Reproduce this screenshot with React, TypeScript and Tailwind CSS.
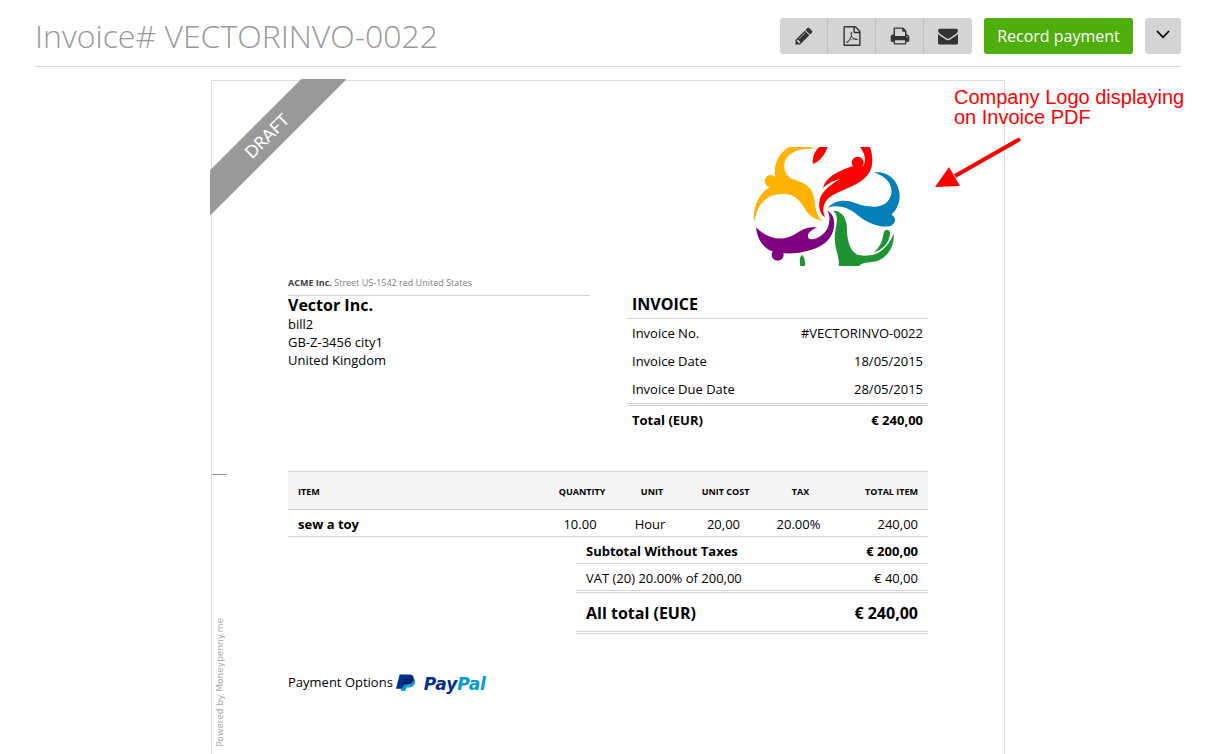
import React from 'react';
import { clsx } from 'clsx';

interface InvoiceLine {
  item: string;
  quantity: string;
  unit: string;
  unitCost: string;
  tax: string;
  total: string;
}

const details = [
  { label: 'Invoice No.', value: '#VECTORINVO-0022' },
  { label: 'Invoice Date', value: '18/05/2015' },
  { label: 'Invoice Due Date', value: '28/05/2015' },
];

const lines: InvoiceLine[] = [
  { item: 'sew a toy', quantity: '10.00', unit: 'Hour', unitCost: '20,00', tax: '20.00%', total: '240,00' },
];

const actions = [
  {
    label: 'Edit',
    path: 'M491 1536l91-91-235-235-91 91v107h128v128h107zM1014 608q0-22-22-22-10 0-17 7l-542 542q-7 7-7 17 0 22 22 22 10 0 17-7l542-542q7-7 7-17zM960 416l416 416-832 832H128v-416zM1643 512q0 53-37 90l-166 166-416-416 166-165q36-38 90-38 53 0 91 38l235 234q37 39 37 91z',
  },
  {
    label: 'Download PDF',
    path: 'M1596 380q28 28 48 76t20 88v1152q0 40-28 68t-68 28H224q-40 0-68-28t-28-68V96q0-40 28-68t68-28h896q40 0 88 20t76 48zm-444-244v376h376q-10-29-22-41l-313-313q-12-12-41-22zm384 1528V640h-416q-40 0-68-28t-28-68V128H256v1536h1280zm-514-593q33 26 84 56 59-7 117-7 147 0 177 49 16 22 2 52 0 1-1 2l-2 2v1q-6 38-71 38-48 0-115-20t-130-53q-221 24-392 83-153 262-242 262-15 0-28-7l-24-12q-1-1-6-5-10-10-6-36 9-40 56-91.5t132-96.5q14-9 23 6 2 2 2 4 52-85 107-197 68-136 104-262-24-82-30.5-159.5T785 552q11-40 42-40h22q23 0 35 15 18 21 9 68-2 6-4 8 1 3 1 8v30q-2 123-14 192 55 164 146 238zm-576 411q52-24 137-158-51 40-87.5 84t-49.5 74zm398-920q-15 42-2 132 1-7 7-44 0-3 7-43 1-4 4-8-1-1-1-2-1-2-1-3-1-22-13-36 0 1-1 2v2zm-124 661q135-54 284-81-2-1-13-9.5t-16-13.5q-76-67-127-176-27 86-83 197-30 56-45 83zm646-16q-24-24-140-24 76 28 124 28 14 0 18-1 0-1-2-3z',
  },
  {
    label: 'Print',
    path: 'M448 1536h896v-256H448v256zm0-640h896V512h-160q-40 0-68-28t-28-68V256H448v640zm1152 64q0-26-19-45t-45-19-45 19-19 45 19 45 45 19 45-19 19-45zm128 0v416q0 13-9.5 22.5t-22.5 9.5h-224v160q0 40-28 68t-68 28H416q-40 0-68-28t-28-68v-160H96q-13 0-22.5-9.5T64 1376V960q0-79 56.5-135.5T256 768h64V224q0-40 28-68t68-28h672q40 0 88 20t76 48l152 152q28 28 48 76t20 88v256h64q79 0 135.5 56.5T1728 960z',
  },
  {
    label: 'Send by email',
    path: 'M1792 710v794q0 66-47 113t-113 47H160q-66 0-113-47T0 1504V710q44 49 101 87 362 246 497 345 57 42 92.5 65.5t94.5 48 110 24.5h2q51 0 110-24.5t94.5-48T1194 1142q170-123 498-345 57-39 100-87zM1792 416q0 79-49 151t-122 123q-376 261-468 325-10 7-42.5 31t-54 38-52 31.5-57.5 27T897 1152h-2q-23 0-49.5-9.5t-57.5-27-52-31.5-54-38-42.5-31Q547 951 171 690 98 639 49 567T0 416q0-66 47-113t113-47h1472q66 0 113 47t47 113z',
  },
];

const CompanyLogo: React.FC = () => (
  <svg viewBox="-66 12 600 357" className="w-[200px] h-[119px]" role="img" aria-label="Company logo">
    <g fill="#ffb300">
      <path d="M12 232C8 190 30 148 60 132L76 100C68 64 90 22 126 8C150 2 178 8 192 18C146 14 108 32 103 62C101 86 112 100 126 108C160 118 186 128 192 165C198 200 200 225 220 233C190 231 175 215 163 195C145 165 130 153 98 153C50 152 20 186 15 232Z" />
      <circle cx="62" cy="114" r="18" />
    </g>
    <g fill="#ff0000">
      <path d="M232 12H208C194 24 187 42 188 63C206 58 226 36 232 12Z" />
      <path d="M226 223C202 210 204 170 217 152C232 132 254 116 272 107C250 112 232 122 219 135C226 104 262 84 308 70L340 70C350 50 344 30 330 12H360C372 48 370 82 345 104C315 134 262 142 236 165C218 182 216 204 226 223Z" />
      <circle cx="323" cy="59" r="18" />
    </g>
    <g fill="#0480b8">
      <path d="M234 194C254 172 284 168 318 181C354 194 394 196 412 176C440 146 420 100 372 89C410 82 448 110 449 160C449 185 436 205 425 214L424 248C394 257 356 242 325 218C296 192 262 184 234 194Z" />
      <circle cx="418" cy="231" r="17" />
    </g>
    <g fill="#1d9331">
      <path d="M250 203C276 203 292 226 291 262C291 290 300 326 322 335C370 347 410 325 431 272C434 315 408 345 380 355C352 360 336 358 328 369H266C270 346 255 320 254 285C254 250 272 225 250 203Z" />
      <path d="M371 328C392 312 398 290 401 270C405 257 420 257 420 273C418 300 396 322 371 328Z" />
      <path d="M156 335C146 346 150 358 151 369H165C167 354 163 344 156 335Z" />
    </g>
    <g fill="#800080">
      <path d="M18 253C42 278 72 290 104 286C144 278 150 250 202 253C180 262 170 274 175 285C188 297 226 278 235 250C241 228 239 214 232 203C260 216 258 264 235 290C210 320 150 333 103 331L66 325C40 315 22 290 18 253Z" />
      <circle cx="83" cy="335" r="18" />
    </g>
  </svg>
);

const PayPalLogo: React.FC = () => (
  <span className="flex items-center gap-2">
    <svg viewBox="0 0 60 50" className="w-[20px] h-[17px]" aria-hidden="true">
      <path fill="#009cde" d="M22 14H54C60 20 59 38 40 40H32L28 50H14Z" />
      <path fill="#003087" d="M11 1H38C52 1 56 9 52 19C48 28 40 31 24 31L17 44H0Z" />
      <path fill="#012169" d="M24 14H47C52 14 53 17 52 19C48 28 40 31 24 31L19 40Z" />
    </svg>
    <span className="pt-1 font-['DejaVu_Sans'] text-[17px] leading-4 font-bold italic text-[#003087]">
      Pay<span className="text-[#009cde]">Pal</span>
    </span>
  </span>
);

const App: React.FC = () => {
  return (
    <div className="min-h-screen flex flex-col bg-white pl-[35px] pr-10 pt-[18px] font-['Open_Sans',sans-serif] text-[13px] leading-[18px] text-black">
      <header className="flex items-center justify-between border-b border-[#d4d4d4] pb-3">
        <h1 className="text-[32px] leading-9 font-light text-[#999]">Invoice# VECTORINVO-0022</h1>
        <div className="flex gap-3">
          <div className="flex overflow-hidden rounded-[3px] bg-[#d4d4d4]">
            {actions.map((action, index) => (
              <button
                key={action.label}
                type="button"
                aria-label={action.label}
                className={clsx(
                  'flex h-9 w-12 items-center justify-center text-[#333]',
                  index < actions.length - 1 && 'border-r border-[#bfbfbf]'
                )}
              >
                <svg viewBox="0 0 1792 1792" className="size-5" fill="currentColor">
                  <path d={action.path} />
                </svg>
              </button>
            ))}
          </div>
          <button type="button" className="h-9 w-[149px] rounded-[3px] bg-[#4fae0a] text-[16px] text-white">
            Record payment
          </button>
          <button
            type="button"
            aria-label="More actions"
            className="flex size-9 items-center justify-center rounded-[3px] bg-[#d4d4d4] pb-1"
          >
            <svg viewBox="0 0 14 9" className="w-[14px] h-[9px]" fill="none" stroke="#000" strokeWidth="1.8">
              <path d="M1 1L7 7.3L13 1" />
            </svg>
          </button>
        </div>
      </header>

      <main className="relative mx-auto mt-[13px] flex w-full max-w-[794px] grow flex-col border border-b-0 border-[#ddd] px-[76px] pt-[66px] pb-10">
        {/* status ribbon */}
        <div className="absolute -left-[2px] -top-[2px] size-[136px] overflow-hidden">
          <div className="absolute -left-[43px] top-[41px] h-8 w-[200px] -rotate-45 bg-[#999] text-center font-['Lato'] text-[17px] leading-8 text-white">
            DRAFT
          </div>
        </div>

        {/* fold mark and credit on the left margin */}
        <div className="absolute left-0 top-[393px] w-[15px] border-t border-[#999]" />
        <div className="absolute left-[2px] bottom-[7px] rotate-180 text-[9px] leading-3 text-[#aaa] font-['DejaVu_Sans'] [writing-mode:vertical-rl]">
          Powered by Moneypenny.me
        </div>

        <div className="flex justify-end">
          <CompanyLogo />
        </div>

        <div className="mt-[9px] flex items-start justify-between">
          <address className="w-[302px] not-italic">
            <p className="h-[21px] border-b border-[#d4d4d4] text-[9px] leading-4 text-[#808080]">
              <b className="text-[#404040]">ACME Inc.</b> Street US-1542 red United States
            </p>
            <p className="pb-px text-[16px] font-bold">Vector Inc.</p>
            <p>bill2</p>
            <p>GB-Z-3456 city1</p>
            <p>United Kingdom</p>
          </address>

          <table className="w-[301px] border-separate border-spacing-0">
            <thead>
              <tr>
                <th colSpan={2} className="h-11 border-b border-[#d4d4d4] px-[5px] pb-[5px] text-left align-bottom text-[16px] font-bold">
                  INVOICE
                </th>
              </tr>
            </thead>
            <tbody>
              {details.map((row, index) => (
                <tr key={row.label}>
                  <td
                    className={clsx(
                      'px-[5px]',
                      index === details.length - 1 ? 'h-[31px] border-b-3 border-double border-[#d4d4d4]' : 'h-7'
                    )}
                  >
                    {row.label}
                  </td>
                  <td
                    className={clsx(
                      'px-[5px] text-right',
                      index === details.length - 1 ? 'h-[31px] border-b-3 border-double border-[#d4d4d4]' : 'h-7'
                    )}
                  >
                    {row.value}
                  </td>
                </tr>
              ))}
              <tr className="font-bold">
                <td className="h-7 px-[5px]">Total (EUR)</td>
                <td className="h-7 px-[5px] text-right">€ 240,00</td>
              </tr>
            </tbody>
          </table>
        </div>

        <table className="mt-[37px] w-full table-fixed border-separate border-spacing-0 text-center [&_td]:border-b [&_td]:border-[#d4d4d4] [&_td]:pt-[2px] [&_th]:border-y [&_th]:border-[#d4d4d4] [&_th]:pt-[2px]">
          <thead>
            <tr className="h-[39px] bg-[#f4f4f4] text-[9px]">
              <th className="pl-[10px] text-left">ITEM</th>
              <th className="w-[70px]">QUANTITY</th>
              <th className="w-[70px]">UNIT</th>
              <th className="w-[77px]">UNIT COST</th>
              <th className="w-[73px]">TAX</th>
              <th className="w-[91px] pr-[10px] text-right">TOTAL ITEM</th>
            </tr>
          </thead>
          <tbody>
            {lines.map((line) => (
              <tr key={line.item} className="h-[27px]">
                <td className="pl-[10px] text-left font-bold">{line.item}</td>
                <td className="pr-1">{line.quantity}</td>
                <td className="pr-1">{line.unit}</td>
                <td className="pr-1">{line.unitCost}</td>
                <td className="pr-1">{line.tax}</td>
                <td className="pr-[10px] text-right">{line.total}</td>
              </tr>
            ))}
          </tbody>
        </table>

        <table className="ml-auto w-[352px] border-separate border-spacing-0 [&_td]:border-[#d4d4d4] [&_td]:px-[10px] [&_td]:pt-[2px]">
          <tbody>
            <tr className="h-[27px] font-bold [&>td]:border-b">
              <td>Subtotal Without Taxes</td>
              <td className="text-right">€ 200,00</td>
            </tr>
            <tr className="h-[29px] [&>td]:border-b-3 [&>td]:border-double">
              <td>VAT (20) 20.00% of 200,00</td>
              <td className="text-right">€ 40,00</td>
            </tr>
            <tr className="h-[41px] text-[16px] font-bold [&>td]:border-b-3 [&>td]:border-double">
              <td>All total (EUR)</td>
              <td className="text-right">€ 240,00</td>
            </tr>
          </tbody>
        </table>

        <div className="mt-[38px] flex items-center gap-[3px]">
          <span>Payment Options</span>
          <PayPalLogo />
        </div>

        {/* callout pointing at the logo */}
        <div className="absolute left-[742px] top-[6px] font-['Liberation_Sans'] text-[20px] leading-5 whitespace-nowrap text-[#ff0000]">
          Company Logo displaying
          <br />
          on Invoice PDF
        </div>
        <svg viewBox="0 0 87 52" className="absolute left-[723px] top-14 w-[87px] h-[52px]" aria-hidden="true">
          <path d="M85 2L20 39" stroke="#ff0000" strokeWidth="4" />
          <path d="M0 50L14 30L25 49Z" fill="#ff0000" />
        </svg>
      </main>
    </div>
  );
};

export default App;
